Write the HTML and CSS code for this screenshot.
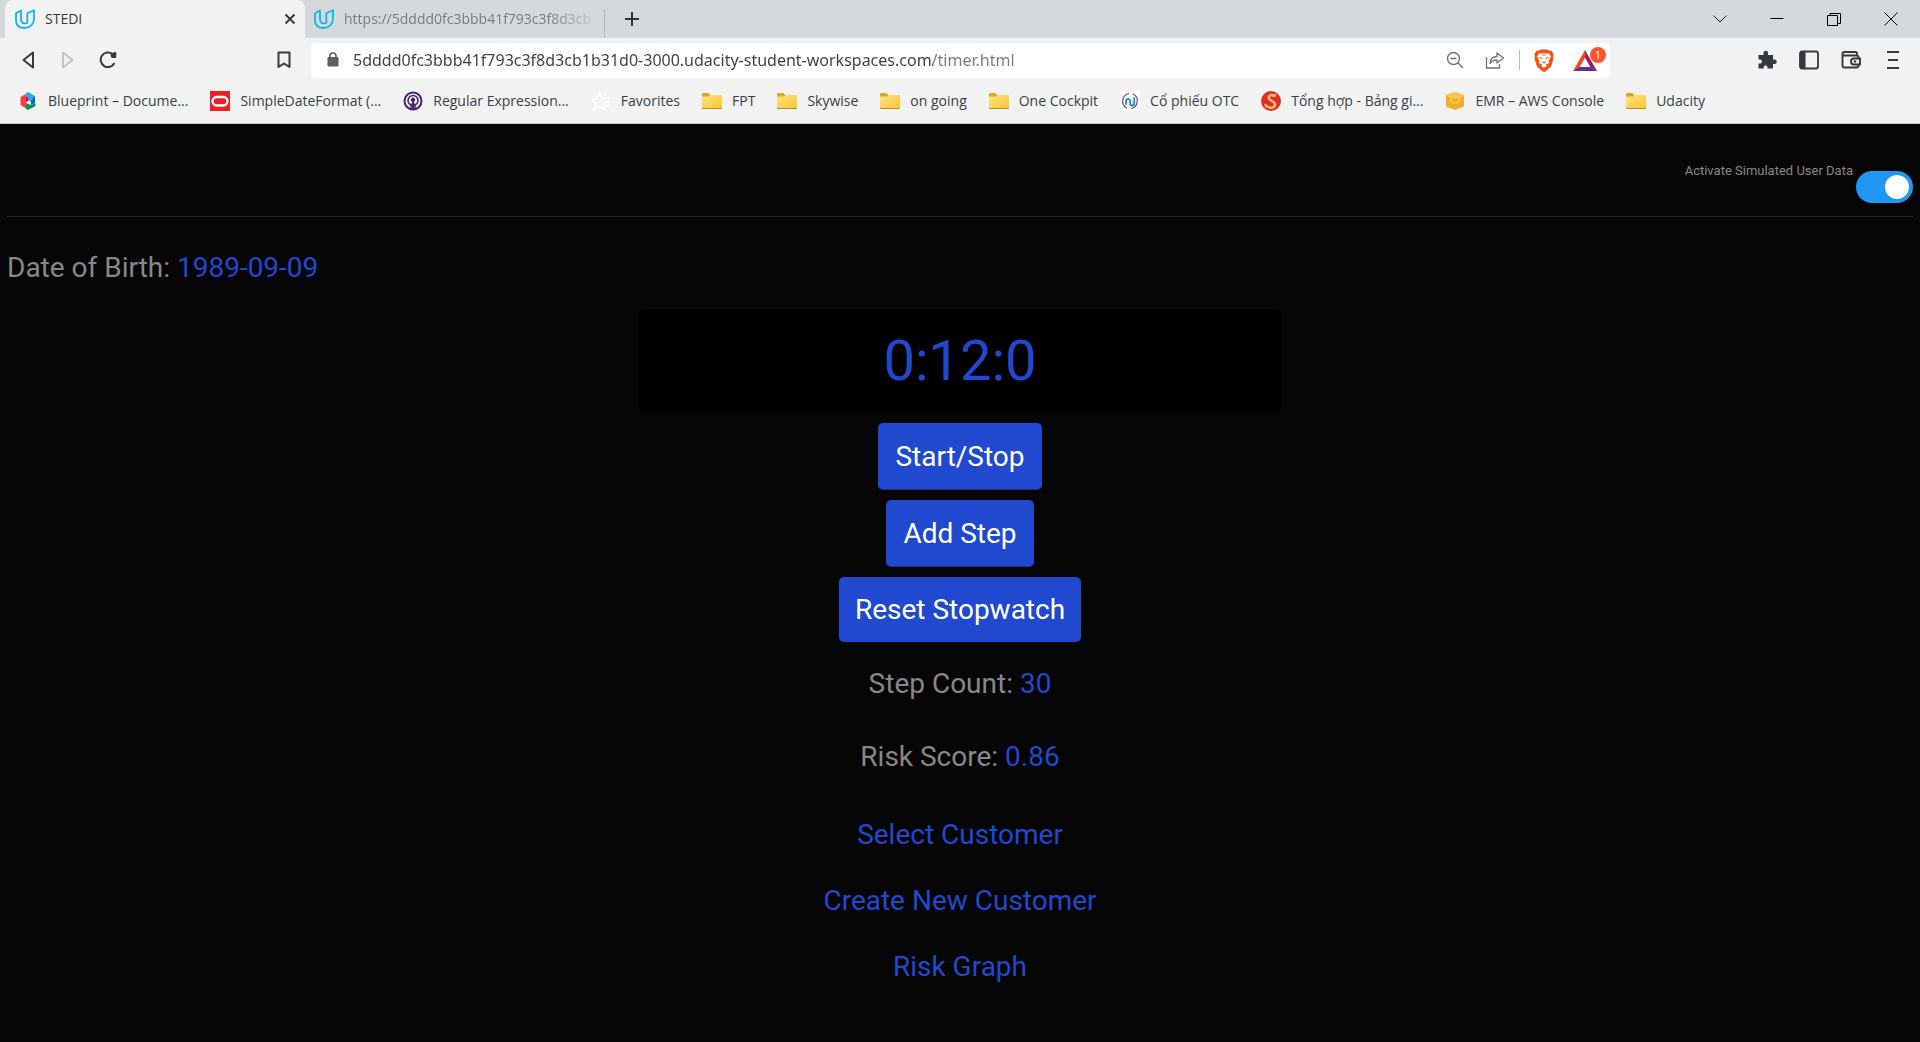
FILE: index.html
```html
<!DOCTYPE html>
<html lang="en">
<head>
<meta charset="utf-8">
<meta name="viewport" content="width=device-width, initial-scale=1">
<title>STEDI</title>
<link rel="stylesheet" href="styles.css">
</head>
<body>
<svg class="sprite" aria-hidden="true">
  <defs>
    <linearGradient id="folder-fill" x1="0" y1="0" x2="1" y2="1"><stop offset="0" stop-color="#ffe383"/><stop offset="1" stop-color="#fbc531"/></linearGradient>
  </defs>
  <symbol id="udacity" viewBox="0 0 20 20">
    <path d="M1 4.300 6 1.500V10c0 3 1.500 4.300 4 4.300.8 0 1.500-.1 2.300-.3V4.300L19 1.200V10c0 5-4 9-9.500 9S1 16.500 1 11.500z" fill="none" stroke="#0bb8ee" stroke-width="1.800" stroke-linejoin="round"/>
  </symbol>
  <symbol id="folder" viewBox="0 0 20 20">
    <path d="M0 3.500C0 2.500.6 2 1.500 2h5L8 4h10v13H0z" fill="#dfa520"/>
    <path d="M0 15h20v1.500c0 1-.5 1.500-1.500 1.500h-17C.5 18 0 17.500 0 16.500z" fill="#b58b33"/>
    <path d="M0 5.500h7L8.500 4h10c1 0 1.500.5 1.500 1.500v10c0 1-.5 1.500-1.500 1.500h-17C.5 17 0 16.500 0 15.500z" fill="url(#folder-fill)"/>
  </symbol>
</svg>

<header class="browser">
  <div class="tabs">
    <div class="tab tab-active">
      <svg class="favicon"><use href="#udacity"/></svg>
      <a class="tab-title" href="#">STEDI</a>
      <button class="icon-button tab-close" aria-label="Close tab"><svg width="12" height="12" viewBox="0 0 12 12"><path d="M1.500 1.500l9 9M10.500 1.500l-9 9" stroke="#35393d" stroke-width="2"/></svg></button>
    </div>
    <div class="tab">
      <svg class="favicon"><use href="#udacity"/></svg>
      <a class="tab-title tab-fade" href="#">https://5dddd0fc3bbb41f793c3f8d3cb</a>
    </div>
    <button class="icon-button new-tab" aria-label="New tab"><svg width="16" height="16" viewBox="0 0 16 16"><path d="M8 1v14M1 8h14" stroke="#303438" stroke-width="2"/></svg></button>
    <div class="window-controls">
      <button class="icon-button" aria-label="Search tabs"><svg width="14" height="14" viewBox="0 0 14 14"><path d="M.5 3.500 7 10l6.500-6.500" fill="none" stroke="#222"/></svg></button>
      <button class="icon-button" aria-label="Minimize"><svg width="14" height="14" viewBox="0 0 14 14"><path d="M.5 6.500h13" stroke="#000"/></svg></button>
      <button class="icon-button" aria-label="Restore"><svg width="14" height="14" viewBox="0 0 14 14"><path d="M.5 3.500h10v10H.5zM3 3.500v-2h10.500v10H11" fill="none" stroke="#000"/></svg></button>
      <button class="icon-button" aria-label="Close"><svg width="14" height="14" viewBox="0 0 14 14"><path d="M.5.5l13 13M13.500.5l-13 13" stroke="#000"/></svg></button>
    </div>
  </div>

  <div class="toolbar">
    <div class="nav">
      <button class="icon-button" aria-label="Back"><svg width="16" height="18" viewBox="0 0 16 18"><path d="M13 1.500v15L3.500 9z" fill="none" stroke="#35393d" stroke-width="2" stroke-linejoin="round"/></svg></button>
      <button class="icon-button" aria-label="Forward"><svg width="16" height="18" viewBox="0 0 16 18"><path d="M3 1.500v15L12.500 9z" fill="none" stroke="#c2c3c4" stroke-width="2" stroke-linejoin="round"/></svg></button>
      <button class="icon-button" aria-label="Reload"><svg width="18" height="18" viewBox="0 0 18 18"><path d="M13.500 3A7.300 7.300 0 1 0 15.500 12" fill="none" stroke="#35393d" stroke-width="2"/><path d="M11.500 3.500 15 1l2.500.5L17 7h-4.500z" fill="#35393d"/></svg></button>
      <button class="icon-button nav-bookmark" aria-label="Bookmark this tab"><svg width="14" height="18" viewBox="0 0 14 18"><path d="M1.500 1.500h11v14.500L7 12.500 1.500 16z" fill="none" stroke="#35393d" stroke-width="2" stroke-linejoin="round"/></svg></button>
    </div>
    <div class="address">
      <svg width="12" height="16" viewBox="0 0 12 16"><rect x="0.500" y="5" width="11" height="9.500" rx="1.200" fill="#5b5f65"/><path d="M3 6V4a3 3 0 0 1 6 0v2" fill="none" stroke="#5b5f65" stroke-width="1.600"/></svg>
      <input class="url" type="text" aria-label="Address" value="5dddd0fc3bbb41f793c3f8d3cb1b31d0-3000.udacity-student-workspaces.com/timer.html">
      <div class="address-actions">
        <button class="icon-button" aria-label="Zoom"><svg width="18" height="18" viewBox="0 0 18 18"><g fill="none" stroke="#6f7275" stroke-width="1.400"><circle cx="7.500" cy="7.500" r="6"/><path d="M12 12l5 5M4.500 7.500h6"/></g></svg></button>
        <button class="icon-button" aria-label="Share"><svg width="20" height="18" viewBox="0 0 20 18"><path d="M1.500 6v11h13v-4M5 12.500c.2-4.500 3-7 7-7V2l6.500 5-6.500 5V9c-3.500 0-5.500 1-7 3.500z" fill="none" stroke="#6f7275" stroke-width="1.300" stroke-linejoin="round"/></svg></button>
        <span class="divider"></span>
        <button class="icon-button" aria-label="Brave Shields"><svg width="20" height="23" viewBox="0 0 20 23"><path d="M5 1.500 7 .5h6l2 1 2.500.3L19.500 5l-.5 2 .5 2.500L17 17.500 12 22l-2 1-2-1-5-4.500L.5 9.500 1 7 .5 5l2-3.200z" fill="#fb4f14"/><path d="M5.500 4l2 .7L10 4l2.500.7 2-.7L17 7.500l-2.300 4 .5 2.500-2.200 1-1.500-.5 1.500 2.500-3 2-3-2 1.500-2.500-1.500.5-2.200-1 .5-2.500L3 7.500z" fill="#fff"/><path d="M5.500 8.500l3 1M14.500 8.500l-3 1M8.500 12.500l1.500 1.300 1.500-1.300M8.500 6h3" fill="none" stroke="#fb4f14" stroke-width="1.100"/></svg></button>
        <button class="icon-button rewards" aria-label="Brave Rewards"><svg width="24" height="21" viewBox="0 0 24 21"><path d="M12 0 0 21l6.500-3.500L12 8z" fill="#ff4724"/><path d="M12 0l12 21-6.500-3.500L12 8z" fill="#9e1f63"/><path d="M0 21l6.500-4h11L24 21z" fill="#662d91"/><path d="M12 8l5 9H7z" fill="#fff"/></svg><span class="badge">1</span></button>
      </div>
    </div>
    <div class="extensions">
      <button class="icon-button" aria-label="Extensions"><svg width="20" height="20" viewBox="0 0 20 20"><path d="M1.500 5h5V3a2 2 0 0 1 4.500 0v2h5v4.500h1.500a2 2 0 0 1 0 4.500H16v4.500h-5.500V17a2 2 0 0 0-3.800 0v1.500H1.500v-5H3a2 2 0 0 0 0-4H1.500z" fill="#35393d"/></svg></button>
      <button class="icon-button" aria-label="Sidebar"><svg width="20" height="20" viewBox="0 0 20 20"><rect x="1" y="1.500" width="18" height="17" rx="2" fill="none" stroke="#35393d" stroke-width="1.800"/><path d="M1 1.500h5.500v17H1z" fill="#35393d"/></svg></button>
      <button class="icon-button" aria-label="Wallet"><svg width="20" height="20" viewBox="0 0 20 20"><g fill="none" stroke="#35393d" stroke-width="1.900"><path d="M1.500 5v10.500c0 1.300.7 2 2 2h12c1.300 0 2-.7 2-2V7.500c0-1.300-.7-2-2-2H3.500c-3 0-2.500-3.500 0-3.500h11c1 0 1.500.5 1.500 1.500v2"/><path d="M19 8.500h-6a3 3 0 0 0 0 6h6z" fill="#f2f2f2"/></g><circle cx="14" cy="11.500" r="1.200" fill="#35393d"/></svg></button>
      <button class="icon-button" aria-label="Menu"><svg width="12" height="20" viewBox="0 0 12 20"><path d="M0 2h12M1 10h10M0 18h12" stroke="#35393d" stroke-width="2"/></svg></button>
    </div>
  </div>

  <nav class="bookmarks" aria-label="Bookmarks">
    <a href="#"><svg class="favicon" viewBox="0 0 20 20"><path d="M10 1l7 4v4l-4 2-4-2V6L6 4z" fill="#35a3f4"/><path d="M17 5v7l-4 2v-4z" fill="#1261cb"/><path d="M6 4l4 2v4l-2 1v6.500L2.500 14V6z" fill="#ef4343"/><path d="M8 6l2 0v4l-2 1z" fill="#b42530"/><path d="M8 12l5 2 4.500-2v3L10 19l-2-1z" fill="#099350"/></svg>Blueprint – Docume...</a>
    <a href="#"><svg class="favicon" viewBox="0 0 20 20"><path d="M0 0h20v20H0z" fill="#f11c24"/><rect x="2.500" y="6" width="15" height="8.500" rx="4.200" fill="none" stroke="#fff" stroke-width="2.400"/></svg>SimpleDateFormat (...</a>
    <a href="#"><svg class="favicon" viewBox="0 0 20 20"><g fill="none" stroke="#48206e"><circle cx="10" cy="10" r="8.500" stroke-width="2"/><circle cx="10" cy="9.500" r="5" stroke-width="1.500"/><path d="M8 18v-5.500M12 18v-5.500" stroke-width="1.500"/></g><path d="M9 18v-7.500a2 2 0 1 1 2 0V18z" fill="#48206e"/></svg>Regular Expression...</a>
    <a href="#"><svg class="favicon" viewBox="0 0 20 20"><path d="M12 12.500l2 6-5.500-3.500L3 19l2-6.500L.8 8H6l2.500-6L11 7.500h8M13 11h6M14 14.500h5" fill="none" stroke="#fff" stroke-width="1.500"/></svg>Favorites</a>
    <a href="#"><svg class="favicon"><use href="#folder"/></svg>FPT</a>
    <a href="#"><svg class="favicon"><use href="#folder"/></svg>Skywise</a>
    <a href="#"><svg class="favicon"><use href="#folder"/></svg>on going</a>
    <a href="#"><svg class="favicon"><use href="#folder"/></svg>One Cockpit</a>
    <a href="#"><svg class="favicon" viewBox="0 0 20 20"><path d="M0 0h20v20H0z" fill="#fff"/><g fill="none" stroke-linecap="round"><path d="M6.500 17A8 8 0 0 1 8.500 2.500M13.500 3A8 8 0 0 1 11.500 17.500" stroke="#7c4aa5" stroke-width="1.300"/><path d="M6 13V9.500a2.200 2.200 0 0 1 4.200 0v3a2 2 0 0 0 4 0V7" stroke="#1690ce" stroke-width="1.800"/></g></svg>Cổ phiếu OTC</a>
    <a href="#"><svg class="favicon" viewBox="0 0 20 20"><circle cx="10" cy="10" r="10" fill="#e22b2c"/><path d="M13.500 5C10 3 7 5 8 7.500s6 3 6 6-4 4.500-8 2" fill="none" stroke="#eec36b" stroke-width="2.400"/><path d="M9 1.500l2.500 2 4-.5-1 3-3-.5zM3 12.500l4 1.500-2.500 3z" fill="#eec36b"/></svg>Tổng hợp - Bảng gi...</a>
    <a href="#"><svg class="favicon" viewBox="0 0 20 20"><path d="M1 4l9-3 9 3v11.500L10 19l-9-3.500z" fill="#f4ae25"/><path d="M1 4l9-3 9 3-9 2z" fill="#fbc351"/><path d="M6 6v5l4 1.500 4-1.500V6M1.500 4.500 10 7l8.500-2.500" fill="none" stroke="#f9d583"/></svg>EMR – AWS Console</a>
    <a href="#"><svg class="favicon"><use href="#folder"/></svg>Udacity</a>
  </nav>
</header>

<main class="page">
  <div class="simulate">
    <label for="simulate">Activate Simulated User Data</label>
    <input class="switch" id="simulate" type="checkbox" role="switch" checked>
  </div>
  <p class="birth">Date of Birth: <span class="value">1989-09-09</span></p>
  <section class="stopwatch">
    <div class="time">0:12:0</div>
    <button class="action bordered">Start/Stop</button>
    <button class="action bordered">Add Step</button>
    <button class="action">Reset Stopwatch</button>
  </section>
  <section class="results">
    <p>Step Count: <span class="value">30</span></p>
    <p>Risk Score: <span class="value">0.86</span></p>
  </section>
  <nav class="links" aria-label="Customer">
    <a href="#">Select Customer</a>
    <a href="#">Create New Customer</a>
    <a href="#">Risk Graph</a>
  </nav>
</main>
</body>
</html>
```
FILE: styles.css
```css
* {
  box-sizing: border-box;
}

body {
  margin: 0;
  min-height: 100vh;
  background: #060606;
  color: #888;
  font-family: Roboto, "Liberation Sans", sans-serif;
}

.sprite {
  position: absolute;
  width: 0;
  height: 0;
}

/* Browser frame */
.browser {
  background: #f2f2f2;
  border-bottom: 1px solid #ccc;
  color: #3b3e42;
  font: 14px/20px "Open Sans", "Noto Sans", sans-serif;
}

.browser a {
  color: inherit;
  text-decoration: none;
}

.icon-button {
  display: flex;
  align-items: center;
  justify-content: center;
  flex: none;
  padding: 0;
  border: 0;
  background: none;
}

.favicon {
  flex: none;
  width: 20px;
  height: 20px;
}

.tabs {
  display: flex;
  height: 38px;
  padding-left: 5px;
  background: #d5d9dc;
}

.tab {
  display: flex;
  align-items: center;
  gap: 10px;
  width: 299px;
  padding: 0 4px 0 9px;
  color: #777b80;
}

.tab-active {
  width: 300px;
  border-radius: 8px 8px 0 0;
  background: #f2f2f2;
  color: #35393d;
  padding: 0 8px 0 10px;
}

.tab-title {
  flex: 1;
  white-space: nowrap;
}

.tab-fade {
  mask-image: linear-gradient(to right, #000 80%, transparent);
}

.tab-close {
  width: 14px;
}

.new-tab {
  width: 54px;
  border-left: 1px solid #b4b8bb;
  margin-top: 9px;
  padding-bottom: 9px;
}

.window-controls {
  display: flex;
  margin-left: auto;
  padding-right: 1px;
}

.window-controls .icon-button {
  width: 57px;
}

.toolbar {
  display: flex;
  align-items: center;
  height: 44px;
}

.nav {
  display: flex;
  width: 311px;
  padding: 0 16px 0 8px;
}

.nav .icon-button {
  width: 40px;
}

.nav .nav-bookmark {
  width: 22px;
  margin-left: auto;
}

.address {
  display: flex;
  align-items: center;
  flex: 1;
  height: 35px;
  padding: 0 4px 0 16px;
  border-radius: 5px;
  background: #fff;
}

.url {
  flex: 1;
  min-width: 0;
  margin-left: 14px;
  padding: 0;
  border: 0;
  background: linear-gradient(to right, #3b3e42 580px, #777b80 580px);
  background-clip: text;
  color: transparent;
  font: 16px/24px "Noto Sans", "Open Sans", sans-serif;
}

.address-actions {
  display: flex;
  align-items: center;
}

.address-actions .icon-button {
  width: 40px;
}

.divider {
  width: 1px;
  height: 20px;
  margin: 0 4px;
  background: #bbb;
}

.address-actions .rewards {
  position: relative;
  width: 42px;
}

.badge {
  position: absolute;
  top: -3px;
  right: 0;
  width: 16px;
  height: 16px;
  border-radius: 8px;
  background: #fb542b;
  color: #fff;
  font: 11px/16px "Open Sans", sans-serif;
}

.extensions {
  display: flex;
  margin-left: 136px;
  padding-right: 6px;
}

.extensions .icon-button {
  width: 42px;
}

.bookmarks {
  display: flex;
  gap: 22px;
  padding: 9px 18px 12px;
}

.bookmarks a {
  display: flex;
  align-items: center;
  gap: 10px;
  white-space: nowrap;
}

/* Stopwatch page */
.page {
  padding: 0 7px 40px;
  font-size: 28px;
  line-height: 40px;
}

.page p {
  margin: 0;
}

.value,
.links a {
  color: #2049d0;
}

.simulate {
  display: flex;
  align-items: flex-start;
  justify-content: flex-end;
  gap: 3px;
  padding: 37px 0 13px;
  border-bottom: 1px solid #282828;
  font-size: 13px;
  line-height: 20px;
}

.switch {
  appearance: none;
  width: 57px;
  height: 32px;
  margin: 10px 0 0;
  padding: 4px;
  border-radius: 16px;
  background: #2196f3;
}

.switch::before {
  content: "";
  display: block;
  width: 24px;
  height: 24px;
  margin-left: auto;
  border-radius: 50%;
  background: #fff;
}

.birth {
  padding: 31px 0 21px;
}

.stopwatch {
  display: flex;
  flex-direction: column;
  align-items: center;
  gap: 10px;
}

.time {
  width: 100%;
  max-width: 642px;
  padding: 20px;
  border-radius: 5px;
  background: #000;
  color: #2049d0;
  font-size: 56px;
  line-height: 64px;
  text-align: center;
}

.action {
  padding: 12px 16px;
  border: 0;
  border-radius: 5px;
  background: #2049d0;
  color: #fff;
  font: 28px/41px Roboto, "Liberation Sans", sans-serif;
}

.bordered {
  border: 1px solid #2049d0;
  border-bottom-color: #163391;
}

.results {
  display: flex;
  flex-direction: column;
  align-items: center;
  gap: 33px;
  padding: 22px 0 38px;
}

.links {
  display: flex;
  flex-direction: column;
  align-items: center;
  gap: 26px;
}

.links a {
  text-decoration: none;
}
```
